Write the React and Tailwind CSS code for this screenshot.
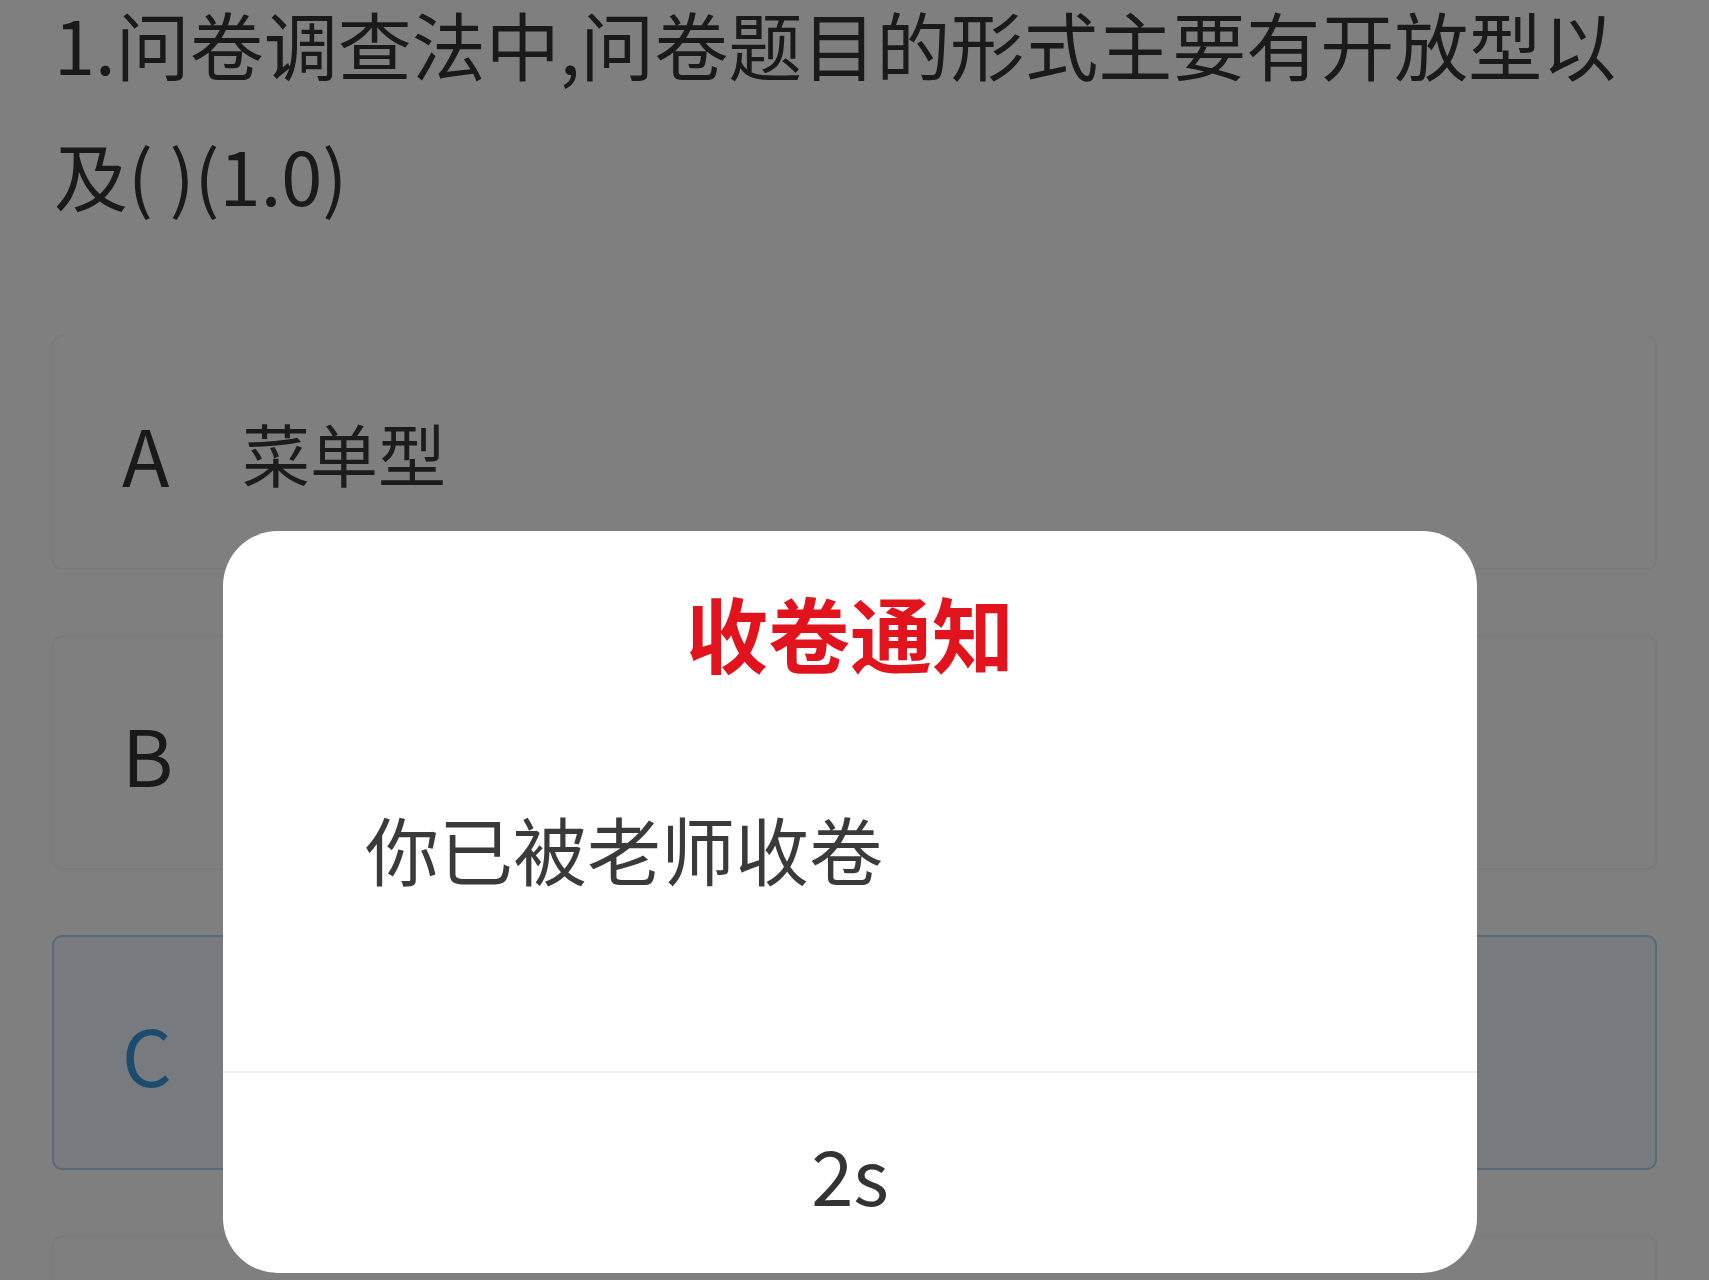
const options = [
  { key: 'A', text: '菜单型' },
  { key: 'B', text: '表格型' },
  { key: 'C', text: '封闭型', selected: true },
];

const App = () => {
  return (
    <div className="relative h-[1280px] w-[1709px] overflow-hidden bg-white font-['Noto_Sans_CJK_SC','Noto_Sans',sans-serif]">
      {/* Question */}
      <div className="px-[54px] text-[74px] leading-[86px] text-[#353535] whitespace-nowrap">
        <div>1.问卷调查法中,问卷题目的形式主要有开放型以</div>
        <div className="mt-[45px]">及( )(1.0)</div>
      </div>

      {/* Options */}
      <div className="mt-[118px] flex flex-col gap-[65px] px-[52px]">
        {options.map((opt) => (
          <div
            key={opt.key}
            className={`flex h-[235px] items-center rounded-[10px] border-2 pl-[68px] ${
              opt.selected ? 'border-[#b4d2f0] bg-[#eef6ff]' : 'border-[#f6f6f6] bg-white'
            }`}
          >
            <span className={`w-[120px] text-[78px] leading-none ${opt.selected ? 'text-[#3a96dc]' : 'text-[#333]'}`}>
              {opt.key}
            </span>
            <span className="text-[68px] leading-none text-[#383838]">{opt.text}</span>
          </div>
        ))}
        {/* next option, only its top edge is in view */}
        <div className="h-[235px] rounded-[10px] border-2 border-[#f6f6f6] bg-white" />
      </div>

      {/* Overlay + modal */}
      <div className="absolute inset-0 bg-black/50 pl-[223px] pt-[531px]">
        <div className="flex h-[742px] w-[1254px] flex-col rounded-[55px] bg-white">
          <div className="pt-[60px] text-center text-[82px] font-bold leading-none text-[#e1141e]">收卷通知</div>
          <div className="mt-[138px] pl-[142px] text-[74px] leading-none text-[#3a3a3a]">你已被老师收卷</div>
          <div className="mt-auto flex h-[202px] items-center justify-center border-t-2 border-[#eeeeee] text-[76px] leading-none text-[#333]">
            2s
          </div>
        </div>
      </div>
    </div>
  );
};

export default App;
